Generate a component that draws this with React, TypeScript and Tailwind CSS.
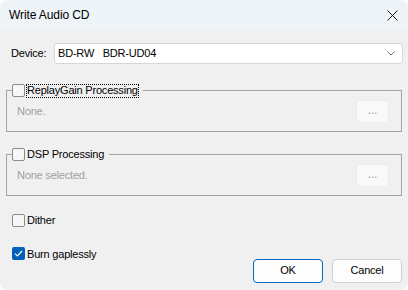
import React from "react";

function Box({ checked = false }: { checked?: boolean }) {
  if (checked) {
    return (
      <span className="flex h-[13px] w-[13px] shrink-0 items-center justify-center rounded-[2px] bg-[#005fb8]">
        <svg width="9" height="7" viewBox="0 0 9 7" fill="none">
          <path d="M1 3.6 L3.4 6 L8 1" stroke="#ffffff" strokeWidth="1.2" />
        </svg>
      </span>
    );
  }
  return <span className="block h-[13px] w-[13px] shrink-0 rounded-[2px] border border-[#8b8b8b] bg-[#f7f7f7]" />;
}

function DotsButton() {
  return (
    <div className="flex h-[23px] w-[33px] items-center justify-center rounded-[4px] border border-[#ececec] bg-[#f9f9f9] text-[12px] leading-none text-[#a0a0a0]">
      <span className="-mt-[3px]">...</span>
    </div>
  );
}

function Group({ label, text, focus = false }: { label: string; text: string; focus?: boolean }) {
  return (
    <fieldset className="mx-[6px] w-[396px] border border-[#a3a3a3] pb-[8px]">
      <legend className="ml-[5px] flex h-[13px] items-center pr-[4px]">
        <Box />
        <span
          className={
            "ml-[1px] flex h-[14px] items-center px-[1px] leading-none " +
            (focus ? "outline outline-1 outline-dotted outline-[#000] -outline-offset-1" : "")
          }
        >
          {label}
        </span>
      </legend>
      <div className="mt-[3px] flex items-center justify-between pl-[10px] pr-[12px]">
        <span className="text-[#a0a0a0]">{text}</span>
        <DotsButton />
      </div>
    </fieldset>
  );
}

export default function App() {
  return (
    <div className="h-[290px] w-[408px] bg-white">
      <div
        className="flex h-[290px] w-[408px] flex-col overflow-hidden rounded-[8px] bg-[#f0f0f0] text-[11px] tracking-[-0.2px] text-black"
        style={{ fontFamily: '"Segoe UI", "Liberation Sans", Arial, sans-serif' }}
      >
        <div className="flex h-[30px] shrink-0 items-center justify-between bg-[#eff4f9] pl-[9px] pr-[10px]">
          <span className="text-[12px] tracking-[-0.1px]">Write Audio CD</span>
          <svg width="11" height="11" viewBox="0 0 11 11" fill="none">
            <path d="M0.5 0.5 L10.5 10.5 M10.5 0.5 L0.5 10.5" stroke="#1a1a1a" strokeWidth="1" />
          </svg>
        </div>

        <div className="mt-[13px] flex items-center pl-[11px]">
          <span className="w-[43px]">Device:</span>
          <div className="flex h-[21px] w-[349px] items-center justify-between rounded-[3px] border border-[#d6d6d6] bg-white pl-[3px] pr-[7px]">
            <span>BD-RW&nbsp;&nbsp;&nbsp;BDR-UD04</span>
            <svg width="8" height="5" viewBox="0 0 8 5" fill="none">
              <path d="M0.5 0.5 L4 4 L7.5 0.5" stroke="#6b6b6b" strokeWidth="1" />
            </svg>
          </div>
        </div>

        <div className="mt-[20px]">
          <Group label="ReplayGain Processing" text="None." focus />
        </div>
        <div className="mt-[16px]">
          <Group label="DSP Processing" text="None selected." />
        </div>

        <div className="mt-[16px] flex items-center gap-[2px] pl-[12px]">
          <Box />
          <span>Dither</span>
        </div>

        <div className="mt-[17px] flex items-start justify-between pl-[12px] pr-[6px]">
          <div className="flex items-center gap-[2px]">
            <Box checked />
            <span>Burn gaplessly</span>
          </div>
          <div className="mt-[13px] flex gap-[9px]">
            <div className="flex h-[24px] w-[70px] items-center justify-center rounded-[4px] border border-[#0067c0] bg-[#fdfdfd]">
              OK
            </div>
            <div className="flex h-[24px] w-[70px] items-center justify-center rounded-[4px] border border-[#d0d0d0] bg-[#fdfdfd]">
              Cancel
            </div>
          </div>
        </div>
      </div>
    </div>
  );
}
